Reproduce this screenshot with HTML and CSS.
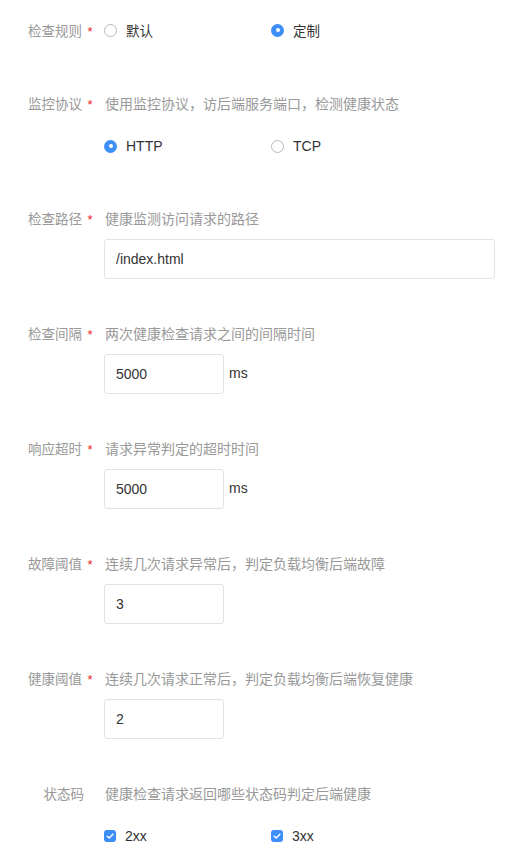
FILE: index.html
```html
<!DOCTYPE html>
<html lang="zh">
<head>
<meta charset="utf-8">
<link rel="stylesheet" href="styles.css">
</head>
<body>
<form class="form">
  <div class="section section-inline">
    <div class="label">检查规则<span class="req">*</span></div>
    <div class="control">
      <label class="opt"><span class="radio"></span><span class="opt-text">默认</span></label>
      <label class="opt"><span class="radio checked"></span><span class="opt-text">定制</span></label>
    </div>
  </div>

  <div class="section">
    <div class="label">监控协议<span class="req">*</span></div>
    <div class="desc">使用监控协议，访后端服务端口，检测健康状态</div>
    <div class="control options">
      <label class="opt"><span class="radio checked"></span><span class="opt-text latin">HTTP</span></label>
      <label class="opt"><span class="radio"></span><span class="opt-text latin">TCP</span></label>
    </div>
  </div>

  <div class="section">
    <div class="label">检查路径<span class="req">*</span></div>
    <div class="desc">健康监测访问请求的路径</div>
    <div class="control">
      <div class="input wide">/index.html</div>
    </div>
  </div>

  <div class="section">
    <div class="label">检查间隔<span class="req">*</span></div>
    <div class="desc">两次健康检查请求之间的间隔时间</div>
    <div class="control">
      <div class="input small">5000</div><span class="unit">ms</span>
    </div>
  </div>

  <div class="section">
    <div class="label">响应超时<span class="req">*</span></div>
    <div class="desc">请求异常判定的超时时间</div>
    <div class="control">
      <div class="input small">5000</div><span class="unit">ms</span>
    </div>
  </div>

  <div class="section">
    <div class="label">故障阈值<span class="req">*</span></div>
    <div class="desc">连续几次请求异常后，判定负载均衡后端故障</div>
    <div class="control">
      <div class="input small">3</div>
    </div>
  </div>

  <div class="section">
    <div class="label">健康阈值<span class="req">*</span></div>
    <div class="desc">连续几次请求正常后，判定负载均衡后端恢复健康</div>
    <div class="control">
      <div class="input small">2</div>
    </div>
  </div>

  <div class="section">
    <div class="label nostar">状态码</div>
    <div class="desc">健康检查请求返回哪些状态码判定后端健康</div>
    <div class="control options">
      <label class="opt"><span class="check"><svg viewBox="0 0 12 12" width="12" height="12"><path d="M3.2 6.2 L5.2 8.1 L8.9 4.2" fill="none" stroke="#fff" stroke-width="1.4" stroke-linecap="round" stroke-linejoin="round"/></svg></span><span class="opt-text latin">2xx</span></label>
      <label class="opt"><span class="check"><svg viewBox="0 0 12 12" width="12" height="12"><path d="M3.2 6.2 L5.2 8.1 L8.9 4.2" fill="none" stroke="#fff" stroke-width="1.4" stroke-linecap="round" stroke-linejoin="round"/></svg></span><span class="opt-text latin">3xx</span></label>
    </div>
  </div>
</form>
</body>
</html>
```

FILE: styles.css
```css
html, body {
  margin: 0;
  padding: 0;
  background: #fff;
}

body {
  font-family: "Liberation Sans", "Noto Sans CJK SC", sans-serif;
  font-size: 13px;
  color: #333;
}

.form {
  padding-top: 10px;
}

.section {
  display: grid;
  grid-template-columns: 96px 1fr;
  column-gap: 9px;
  row-gap: 11px;
  margin-bottom: 44px;
}

.section-inline {
  margin-bottom: 43px;
  align-items: center;
}

.label {
  height: 20px;
  line-height: 20px;
  text-align: right;
  color: #999;
  font-family: "Noto Sans CJK SC", sans-serif;
  font-size: 13.5px;
  white-space: nowrap;
}

.label .req {
  display: inline-block;
  width: 12px;
  text-align: center;
  color: #f0241e;
  font-family: "Liberation Sans", sans-serif;
  font-size: 13px;
  margin-left: 2px;
}

.label.nostar {
  padding-right: 12px;
}

.desc {
  height: 20px;
  line-height: 20px;
  color: #999;
  font-family: "Noto Sans CJK SC", sans-serif;
  font-size: 14px;
  white-space: nowrap;
}

.control {
  grid-column: 2;
  display: flex;
  align-items: center;
  box-sizing: border-box;
  height: 40px;
  margin-left: -1px;
}

.control.options {
  padding-top: 4px;
}

.opt {
  display: flex;
  align-items: center;
  width: 167px;
}

.opt-text {
  font-family: "Noto Sans CJK SC", sans-serif;
  font-size: 13.5px;
  color: #333;
}

.opt-text.latin {
  font-family: "Liberation Sans", sans-serif;
  font-size: 14px;
}

.radio {
  box-sizing: border-box;
  width: 13px;
  height: 13px;
  border-radius: 50%;
  border: 1px solid #b8b8b8;
  margin-right: 9px;
  background: #fff;
  position: relative;
}

.radio.checked {
  border: none;
  background: #3e8ef7;
}

.radio.checked::after {
  content: "";
  position: absolute;
  left: 4.5px;
  top: 4.5px;
  width: 4px;
  height: 4px;
  border-radius: 50%;
  background: #fff;
}

.check {
  width: 12px;
  height: 12px;
  border-radius: 3px;
  background: #3e8ef7;
  margin-right: 9px;
  display: flex;
}

.input {
  box-sizing: border-box;
  height: 40px;
  line-height: 38px;
  border: 1px solid #dfe4ea;
  border-radius: 3px;
  padding: 0 11px;
  font-family: "Liberation Sans", sans-serif;
  font-size: 14px;
  color: #333;
  background: #fff;
}

.input.wide {
  width: 391px;
}

.input.small {
  width: 120px;
}

.unit {
  margin-left: 5px;
  font-family: "Liberation Sans", sans-serif;
  font-size: 14px;
  color: #333;
  margin-top: -3px;
}
```
